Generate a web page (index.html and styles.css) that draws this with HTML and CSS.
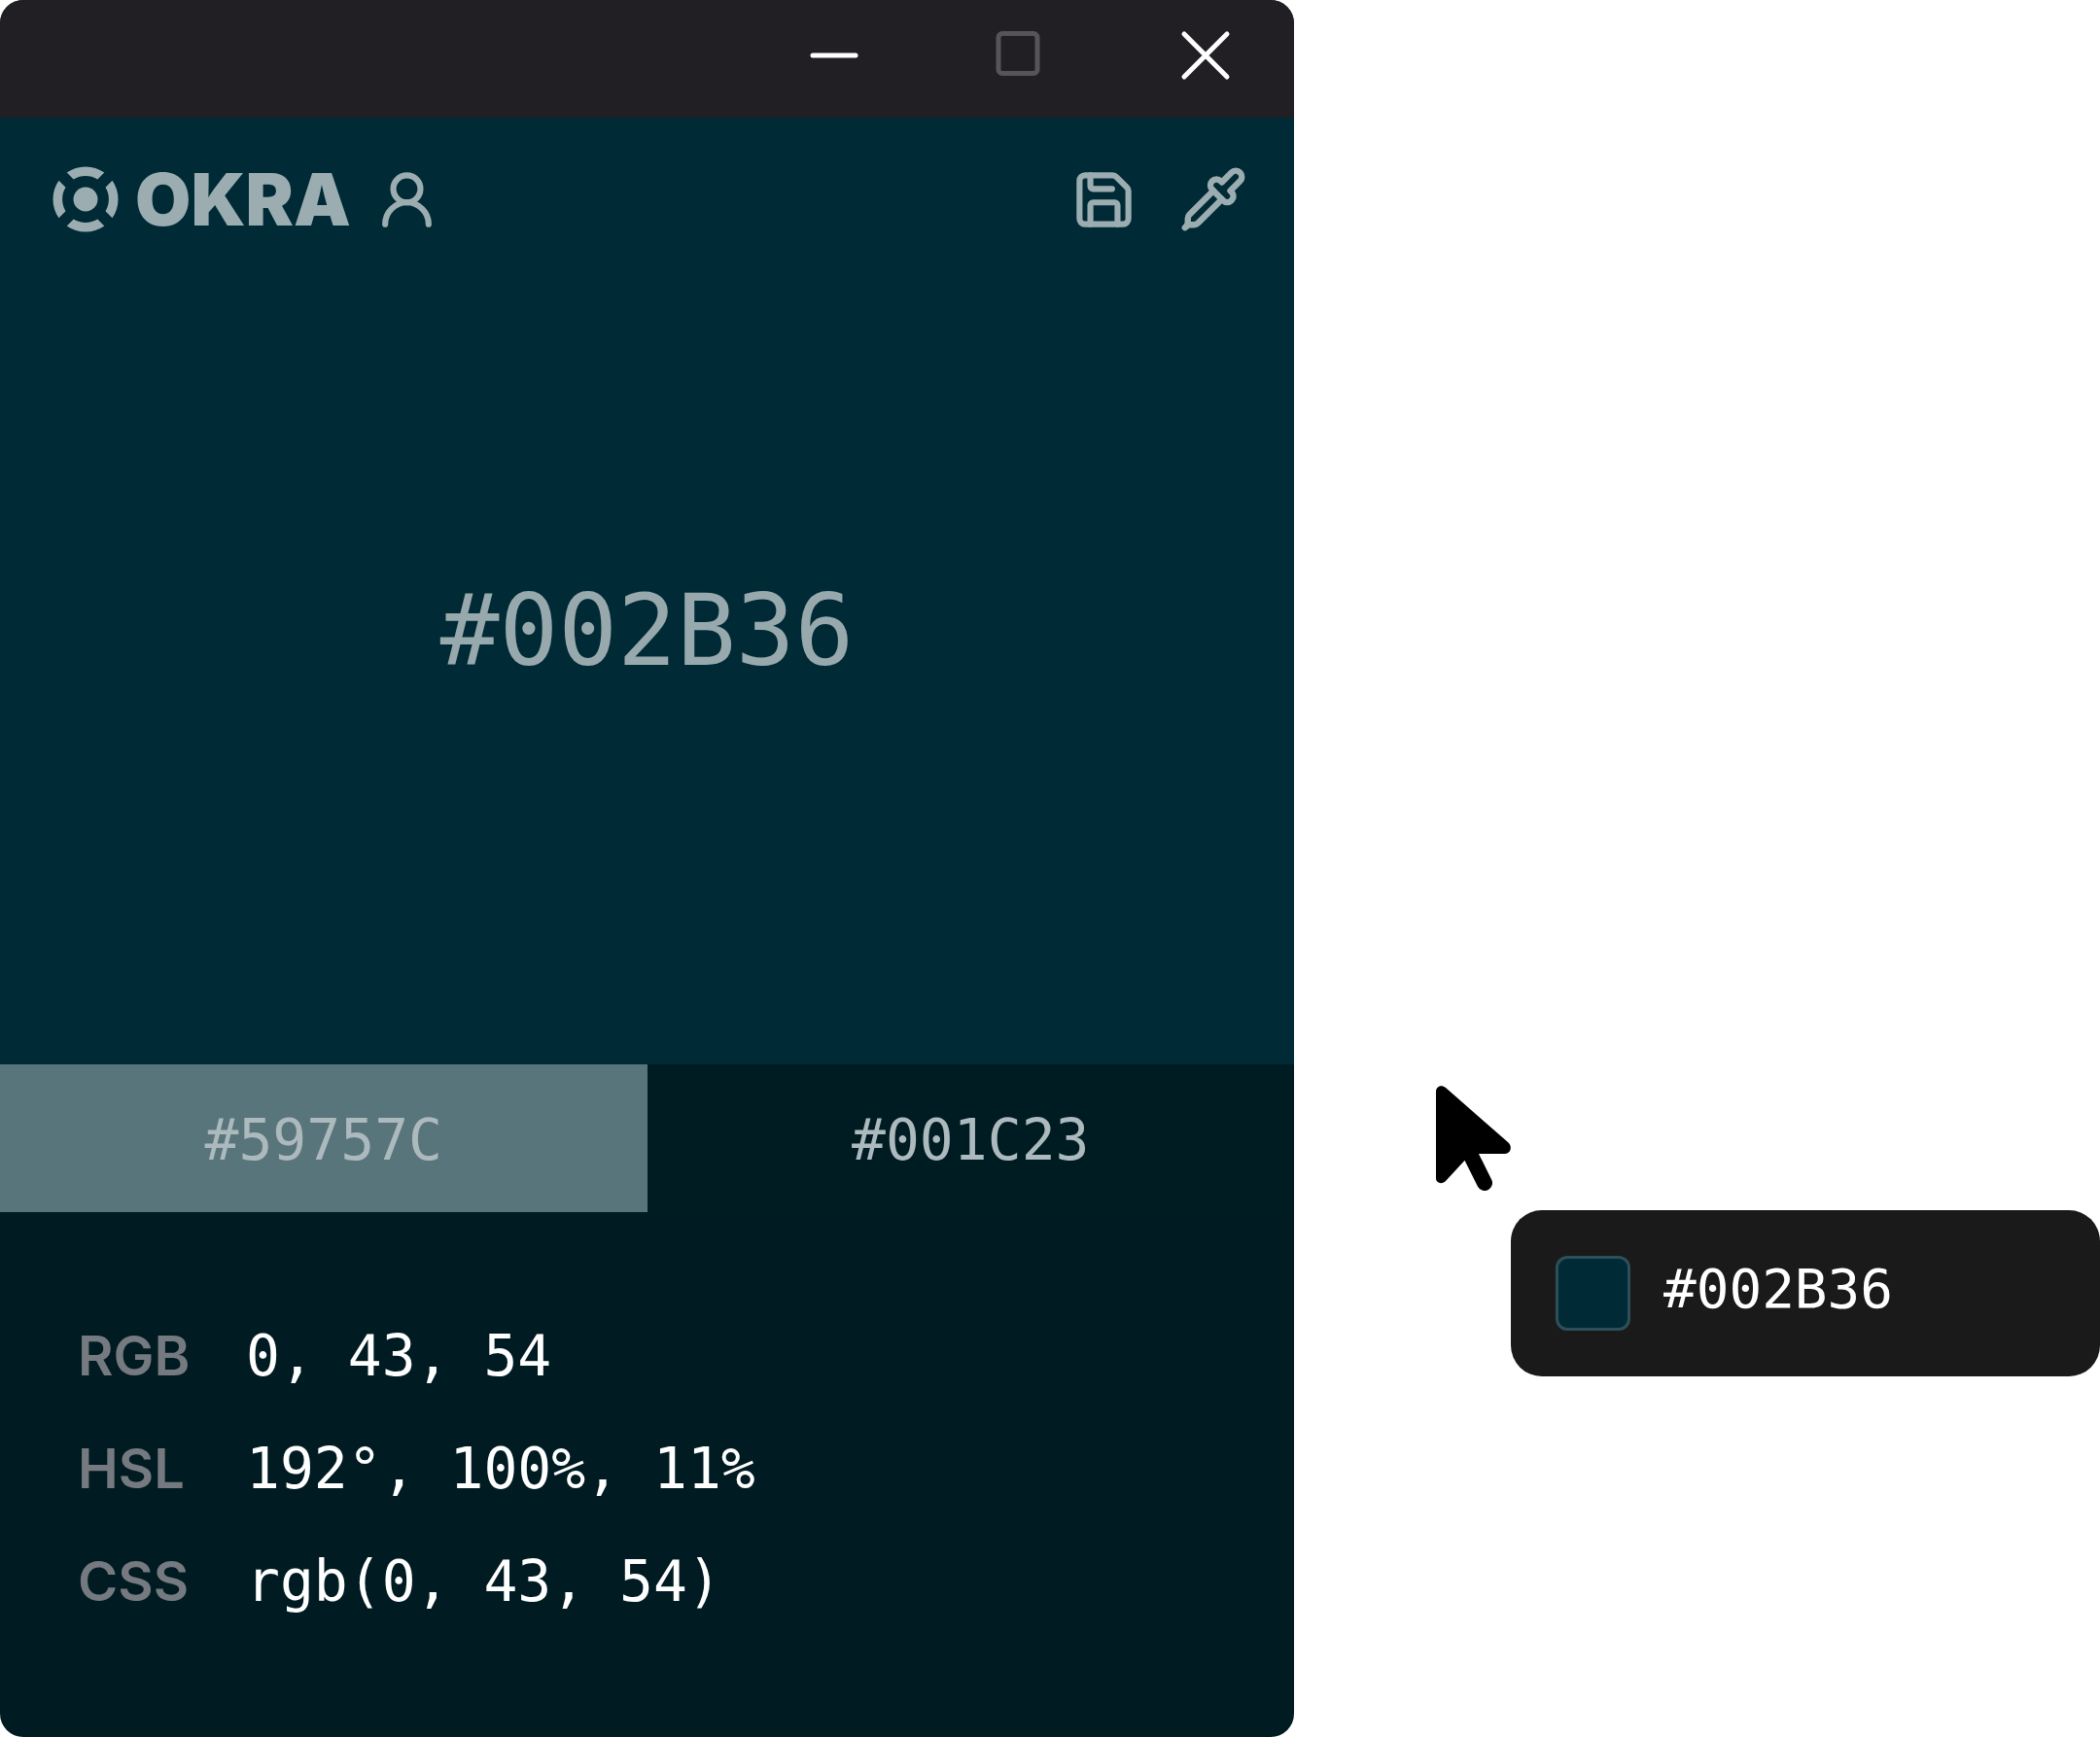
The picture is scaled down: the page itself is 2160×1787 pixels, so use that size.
FILE: index.html
```html
<!DOCTYPE html>
<html lang="en">
<head>
<meta charset="utf-8">
<meta name="viewport" content="width=device-width, initial-scale=1">
<title>Okra</title>
<link rel="stylesheet" href="styles.css">
</head>
<body>
<div class="stage">
  <main class="window">
    <div class="titlebar">
      <button class="titlebar-button" type="button" aria-label="Minimize">
        <svg width="48" height="48" viewBox="0 0 48 48"><path d="M2 24h44"/></svg>
      </button>
      <button class="titlebar-button" type="button" aria-label="Maximize" disabled>
        <svg width="48" height="48" viewBox="0 0 48 48"><rect x="2" y="1.500" width="40" height="41" rx="4"/></svg>
      </button>
      <button class="titlebar-button" type="button" aria-label="Close">
        <svg width="48" height="48" viewBox="0 0 48 48"><path d="M2 2l44 44M46 2L2 46"/></svg>
      </button>
    </div>

    <section class="color">
      <header class="header">
        <a class="brand" href="#">
          <svg class="mark" width="68" height="68" viewBox="-34 -34 68 68" aria-hidden="true">
            <defs><path id="arc" d="M-19.300-27.500A34 34 0 0 1 19.300-27.500L12.300-20.500A24 24 0 0 0-12.300-20.500Z"/></defs>
            <use href="#arc"/>
            <use href="#arc" transform="rotate(90)"/>
            <use href="#arc" transform="rotate(180)"/>
            <use href="#arc" transform="rotate(270)"/>
            <circle r="12.500"/>
          </svg>
          <span class="brand-name">OKRA</span>
        </a>
        <button class="icon-button" type="button" aria-label="Account">
          <svg class="icon" viewBox="0 0 24 24"><circle cx="12" cy="8" r="5"/><path d="M20 21a8 8 0 0 0-16 0"/></svg>
        </button>
        <div class="tools">
          <button class="icon-button" type="button" aria-label="Save color">
            <svg class="icon" viewBox="0 0 24 24"><path d="M15.200 3a2 2 0 0 1 1.400.6l3.800 3.800a2 2 0 0 1 .6 1.400V19a2 2 0 0 1-2 2H5a2 2 0 0 1-2-2V5a2 2 0 0 1 2-2z"/><path d="M17 21v-7a1 1 0 0 0-1-1H8a1 1 0 0 0-1 1v7"/><path d="M7 3v4a1 1 0 0 0 1 1h7"/></svg>
          </button>
          <button class="icon-button" type="button" aria-label="Pick color">
            <svg class="icon icon-pick" viewBox="0 0 24 24"><path d="m12 9-8.414 8.414A2 2 0 0 0 3 18.828v1.344a2 2 0 0 1-.586 1.414A2 2 0 0 1 3.828 21h1.344a2 2 0 0 0 1.414-.586L15 12"/><path d="m18 9 .4.4a1 1 0 1 1-3 3l-3.800-3.800a1 1 0 1 1 3-3l.4.4 3.400-3.400a1 1 0 1 1 3 3z"/><path d="m2 22 .414-.414"/></svg>
          </button>
        </div>
      </header>
      <h1 class="hex">#002B36</h1>
    </section>

    <div class="shades">
      <button class="shade shade-light" type="button">#59757C</button>
      <button class="shade shade-dark" type="button">#001C23</button>
    </div>

    <dl class="formats">
      <div class="format"><dt>RGB</dt><dd>0, 43, 54</dd></div>
      <div class="format"><dt>HSL</dt><dd>192°, 100%, 11%</dd></div>
      <div class="format"><dt>CSS</dt><dd>rgb(0, 43, 54)</dd></div>
    </dl>
  </main>

  <aside class="picker">
    <svg class="cursor" width="77" height="108" viewBox="0 0 77 108" aria-hidden="true">
      <path d="M0 6C0 1 5-2 10 2L74.500 58.500C79 63 76.500 70 71 70H43.800L29.600 76.700 10 98C6 102 0 100 0 95Z"/>
      <path class="cursor-tail" d="M36 72L50 100"/>
    </svg>
    <div class="tooltip">
      <span class="swatch"></span>
      <span class="tooltip-hex">#002B36</span>
    </div>
  </aside>
</div>
</body>
</html>
```
FILE: styles.css
```css
* {
  box-sizing: border-box;
}

body {
  margin: 0;
  background: #fff;
  font-family: Inter, "Liberation Sans", sans-serif;
}

button {
  margin: 0;
  padding: 0;
  border: 0;
  background: none;
  color: inherit;
  font: inherit;
}

svg {
  display: block;
}

.stage {
  display: grid;
  grid-template-columns: 1331fr 683fr;
  column-gap: 146px;
  min-height: 100vh;
}

.window {
  display: flex;
  flex-direction: column;
  overflow: hidden;
  border-radius: 24px;
  background: #001c22;
}

/* Title bar */

.titlebar {
  display: flex;
  justify-content: flex-end;
  gap: 9px;
  height: 121px;
  padding-bottom: 7px;
  background: #211f24;
}

.titlebar-button {
  display: grid;
  place-items: center;
  width: 182px;
}

.titlebar-button svg {
  overflow: visible;
  fill: none;
  stroke: #fff;
  stroke-width: 5;
  stroke-linecap: round;
}

.titlebar-button:disabled svg {
  stroke: #555459;
}

/* Current color */

.color {
  display: flex;
  flex: 1;
  flex-direction: column;
  background: #002b36;
  color: #9badb1;
}

.header {
  display: flex;
  align-items: center;
  padding: 49px 48px 0 54px;
}

.brand {
  display: flex;
  align-items: center;
  gap: 17px;
  margin-right: 24px;
  color: inherit;
  text-decoration: none;
}

.mark {
  fill: currentColor;
}

.brand-name {
  font-size: 74px;
  font-weight: 900;
  line-height: 68px;
}

.tools {
  display: flex;
  align-items: center;
  gap: 44px;
  margin-left: auto;
}

.icon {
  width: 67px;
  height: 67px;
  fill: none;
  stroke: currentColor;
  stroke-width: 2.2;
  stroke-linecap: round;
  stroke-linejoin: round;
}

.icon-pick {
  width: 70px;
  height: 70px;
}

.hex {
  display: grid;
  flex: 1;
  place-items: center;
  margin: 0;
  padding-bottom: 38px;
  color: #97a9ad;
  font: 400 101px "DejaVu Sans Mono", monospace;
}

/* Shades */

.shades {
  display: grid;
  grid-template-columns: 1fr 1fr;
}

.shade {
  height: 152px;
  padding-top: 4px;
  color: #acb9bd;
  font: 400 58px "DejaVu Sans Mono", monospace;
}

.shade-light {
  background: #59757c;
}

.shade-dark {
  background: #001c23;
}

/* Formats */

.formats {
  margin: 0;
  padding: 90px 80px 102px;
}

.format {
  display: grid;
  grid-template-columns: 173px 1fr;
  align-items: baseline;
  line-height: 116px;
}

.format dt {
  color: #757980;
  font-size: 56px;
  font-weight: 600;
}

.format dd {
  margin: 0;
  color: #fff;
  font-family: "DejaVu Sans Mono", monospace;
  font-size: 58px;
}

/* Picker overlay */

.picker {
  align-self: end;
  padding-bottom: 371px;
}

.cursor-tail {
  stroke: #000;
  stroke-width: 16;
  stroke-linecap: round;
}

.tooltip {
  display: flex;
  align-items: center;
  gap: 34px;
  height: 171px;
  margin: 20px 0 0 77px;
  padding: 0 46px;
  border-radius: 32px;
  background: #1a1a1a;
}

.swatch {
  width: 77px;
  height: 77px;
  border: 3px solid #2d4f58;
  border-radius: 12px;
  background: #002b36;
}

.tooltip-hex {
  padding-bottom: 10px;
  color: #fff;
  font: 400 56px "DejaVu Sans Mono", monospace;
}
```
